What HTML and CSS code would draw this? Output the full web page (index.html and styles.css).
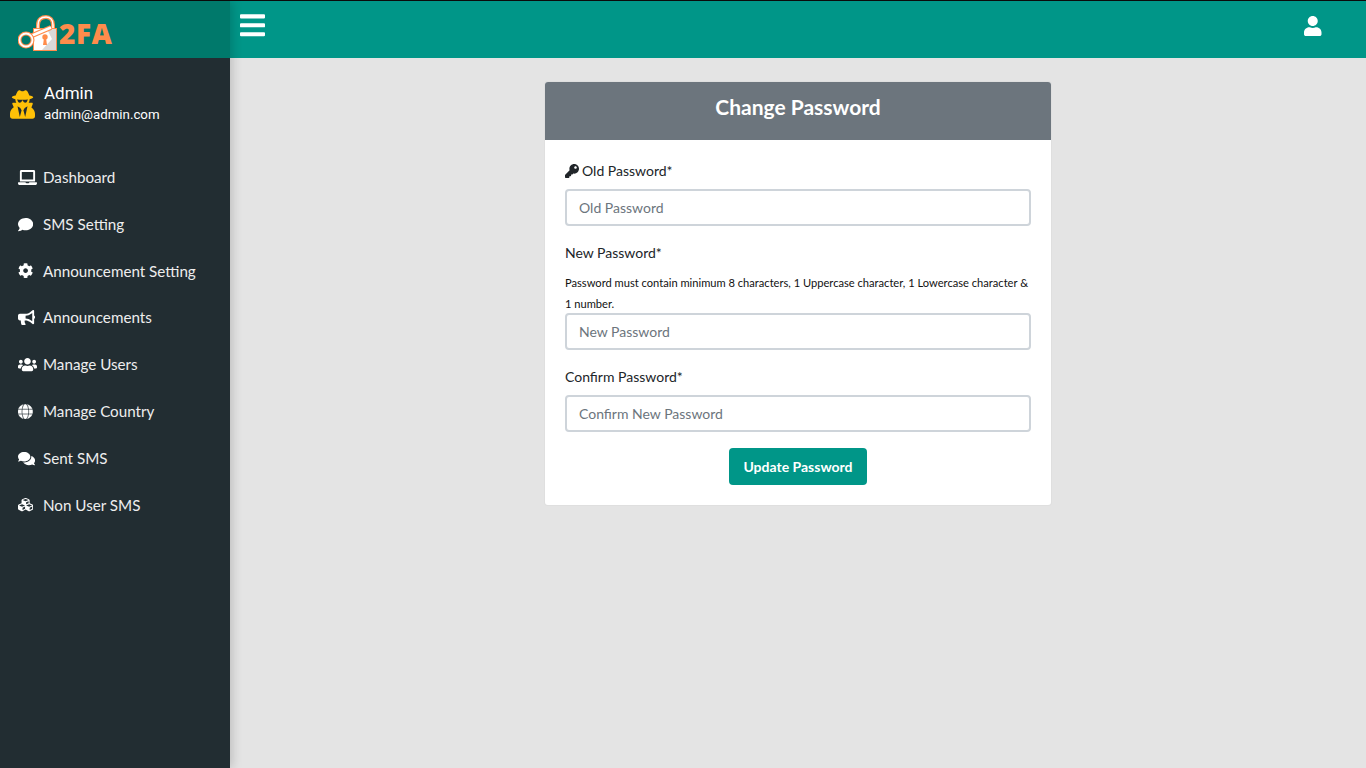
FILE: index.html
```html
<!DOCTYPE html>
<html lang="en">
<head>
<meta charset="utf-8">
<title>Change Password</title>
<link rel="stylesheet" href="styles.css">
</head>
<body>
<div class="layout">
  <aside class="sidebar">
    <div class="brand">
      <svg class="brand-mark" viewBox="0 0 39 37" aria-hidden="true">
        <path d="M20 16 V10 C20 4 24 2 28 2 C32 2 35 5 35 10 V14" fill="none" stroke="#ff8c4b" stroke-width="4"/>
        <path d="M20 16 V10 C20 4 24 2 28 2 C32 2 35 5 35 10 V14" fill="none" stroke="#fff" stroke-width="1.500"/>
        <rect x="15.500" y="13.500" width="23" height="22" fill="#fff" stroke="#ff8c4b"/>
        <path d="M29 14 H38 V35 H24 L34 24 Z" fill="#d9d9d9"/>
        <circle cx="27" cy="22" r="2.700" fill="#ff8c4b"/>
        <path d="M26 23 h2 l1 7 h-4 Z" fill="#ff8c4b"/>
        <path d="M13 21 L33 12.500" stroke="#ff8c4b" stroke-width="5"/>
        <path d="M13 21 L33 12.500" stroke="#fff" stroke-width="2.500"/>
        <circle cx="8" cy="25" r="6.500" fill="#00796b" stroke="#ff8c4b" stroke-width="4"/>
        <circle cx="8" cy="25" r="6.500" fill="none" stroke="#fff" stroke-width="1.800"/>
      </svg>
      <span class="brand-name">2FA</span>
    </div>
    <div class="profile">
      <svg class="profile-icon" viewBox="0 0 448 512" aria-hidden="true"><path d="M383.900 308.300l23.900-62.600c4-10.500-3.700-21.700-15-21.700h-58.500c11-18.900 17.800-40.600 17.800-64v-.3c39.200-7.800 64-19.100 64-31.700 0-13.300-27.300-25.100-70.100-33-9.200-32.800-27-65.800-40.600-82.800-9.500-11.900-25.900-15.600-39.500-8.800l-27.600 13.800c-9 4.500-19.600 4.500-28.600 0L182.100 3.400c-13.600-6.800-30-3.100-39.500 8.800-13.500 17-31.400 50-40.600 82.800-42.700 7.900-70 19.700-70 33 0 12.600 24.800 23.900 64 31.700v.3c0 23.400 6.800 45.100 17.800 64H56.300c-11.500 0-19.200 11.700-14.700 22.300l25.800 60.200C27.300 329.800 0 372.700 0 422.400v44.800C0 491.900 20.100 512 44.800 512h358.400c24.700 0 44.800-20.100 44.800-44.800v-44.800c0-48.400-25.800-90.400-64.100-114.100zM176 480l-41.600-192 49.600 32 24 40-32 120zm96 0l-32-120 24-40 49.600-32L272 480zm41.700-298.500c-3.900 11.900-7 24.600-16.500 33.400-10.100 9.300-48 22.400-64-25-2.800-8.400-15.400-8.400-18.300 0-17 50.200-56 32.400-64 25-9.500-8.800-12.700-21.500-16.500-33.400-.8-2.500-6.300-5.700-6.300-5.800v-10.800c28.300 3.600 61 5.800 96 5.800s67.700-2.100 96-5.800v10.800c-.1.100-5.600 3.200-6.400 5.800z"/></svg>
      <div class="profile-text">
        <div class="profile-name">Admin</div>
        <div class="profile-mail">admin@admin.com</div>
      </div>
    </div>
    <nav class="menu">
      <a class="menu-item" href="#"><span class="menu-icon"><svg viewBox="0 0 640 512" aria-hidden="true"><path d="M624 416H381.540c-.74 19.810-14.710 32-32.740 32H288c-18.690 0-33.020-17.470-32.770-32H16c-8.800 0-16 7.200-16 16v16c0 35.200 28.800 64 64 64h512c35.200 0 64-28.800 64-64v-16c0-8.800-7.200-16-16-16zM576 48c0-26.400-21.600-48-48-48H112C85.600 0 64 21.600 64 48v336h512V48zm-64 272H128V64h384v256z"/></svg></span>Dashboard</a>
      <a class="menu-item" href="#"><span class="menu-icon"><svg viewBox="0 0 512 512" aria-hidden="true"><path d="M256 32C114.600 32 0 125.100 0 240c0 49.600 21.400 95 57 130.700C44.500 421.100 2.700 466 2.200 466.500c-2.200 2.300-2.800 5.700-1.500 8.700S4.800 480 8 480c66.300 0 116-31.800 140.600-51.400 32.700 12.300 69 19.400 107.400 19.400 141.400 0 256-93.100 256-208S397.400 32 256 32z"/></svg></span>SMS Setting</a>
      <a class="menu-item" href="#"><span class="menu-icon"><svg viewBox="0 0 512 512" aria-hidden="true"><path d="M487.400 315.700l-42.600-24.600c4.300-23.200 4.300-47 0-70.200l42.600-24.600c4.900-2.800 7.100-8.600 5.500-14-11.100-35.600-30-67.800-54.700-94.600-3.800-4.100-10-5.100-14.800-2.300L380.800 110c-17.900-15.400-38.500-27.300-60.800-35.100V25.800c0-5.600-3.900-10.500-9.400-11.700-36.700-8.200-74.300-7.800-109.200 0-5.500 1.200-9.400 6.100-9.400 11.700V75c-22.200 7.900-42.800 19.800-60.800 35.100L88.700 85.500c-4.900-2.800-11-1.900-14.800 2.300-24.700 26.700-43.600 58.900-54.700 94.600-1.700 5.400.6 11.200 5.500 14L67.300 221c-4.300 23.200-4.300 47 0 70.200l-42.600 24.600c-4.900 2.800-7.100 8.600-5.500 14 11.100 35.600 30 67.800 54.700 94.600 3.800 4.100 10 5.100 14.800 2.300l42.600-24.600c17.900 15.400 38.500 27.300 60.800 35.100v49.200c0 5.600 3.900 10.500 9.400 11.700 36.700 8.200 74.300 7.800 109.200 0 5.500-1.200 9.400-6.100 9.400-11.700v-49.200c22.200-7.900 42.800-19.800 60.800-35.100l42.600 24.600c4.900 2.800 11 1.900 14.800-2.300 24.700-26.700 43.600-58.900 54.700-94.600 1.500-5.500-.7-11.300-5.600-14.100zM256 336c-44.100 0-80-35.900-80-80s35.900-80 80-80 80 35.900 80 80-35.900 80-80 80z"/></svg></span>Announcement Setting</a>
      <a class="menu-item" href="#"><span class="menu-icon"><svg viewBox="0 0 576 512" aria-hidden="true"><path d="M576 240c0-23.630-12.950-44.040-32-55.120V32.010C544 23.260 537.020 0 512 0c-7.120 0-14.190 2.380-19.980 7.020l-85.030 68.030C364.280 109.190 310.660 128 256 128H64c-35.350 0-64 28.650-64 64v96c0 35.350 28.650 64 64 64h33.700c-1.390 10.480-2.180 21.140-2.180 32 0 39.770 9.260 77.350 25.560 110.940 5.190 10.690 16.520 17.060 28.400 17.060h74.280c26.050 0 41.690-29.840 25.900-50.560-16.400-21.520-26.150-48.360-26.150-77.440 0-11.110 1.620-21.790 4.410-32H256c54.660 0 108.280 18.810 150.980 52.950l85.030 68.030a32.023 32.023 0 0 0 19.980 7.020c24.920 0 32-22.780 32-32V295.130C563.050 284.040 576 263.630 576 240zm-96 141.420l-33.050-26.440C392.950 311.780 325.120 288 256 288v-96c69.120 0 136.950-23.780 190.950-66.980L480 98.580v282.840z"/></svg></span>Announcements</a>
      <a class="menu-item" href="#"><span class="menu-icon"><svg viewBox="0 0 640 512" aria-hidden="true"><path d="M96 224c35.300 0 64-28.700 64-64s-28.700-64-64-64-64 28.700-64 64 28.700 64 64 64zm448 0c35.300 0 64-28.700 64-64s-28.700-64-64-64-64 28.700-64 64 28.700 64 64 64zm32 32h-64c-17.600 0-33.500 7.100-45.100 18.600 40.300 22.100 68.900 62 75.100 109.400h66c17.700 0 32-14.300 32-32v-32c0-35.300-28.700-64-64-64zm-256 0c61.900 0 112-50.100 112-112S381.900 32 320 32 208 82.100 208 144s50.100 112 112 112zm76.800 32h-8.300c-20.800 10-43.900 16-68.500 16s-47.600-6-68.500-16h-8.300C179.600 288 128 339.600 128 403.200V432c0 26.500 21.500 48 48 48h288c26.500 0 48-21.500 48-48v-28.800c0-63.600-51.600-115.200-115.200-115.200zm-223.700-13.400C161.500 263.100 145.600 256 128 256H64c-35.300 0-64 28.700-64 64v32c0 17.700 14.300 32 32 32h65.900c6.300-47.400 34.900-87.300 75.200-109.400z"/></svg></span>Manage Users</a>
      <a class="menu-item" href="#"><span class="menu-icon"><svg class="globe-icon" viewBox="0 0 496 512" aria-hidden="true"><path d="M336.500 160C322 70.700 287.800 8 248 8s-74 62.700-88.500 152h177zM152 256c0 22.200 1.200 43.500 3.300 64h185.300c2.100-20.500 3.300-41.800 3.300-64s-1.200-43.500-3.300-64H155.300c-2.100 20.500-3.300 41.800-3.300 64zm324.700-96c-28.600-67.900-86.500-120.400-158-141.600 24.400 33.800 41.200 84.700 50 141.600h108zM177.200 18.400C105.800 39.600 47.800 92.100 19.300 160h108c8.700-56.900 25.500-107.800 49.900-141.600zM487.400 192H372.700c2.100 21 3.300 42.500 3.300 64s-1.200 43-3.300 64h114.600c5.500-20.500 8.600-41.800 8.600-64s-3.100-43.500-8.500-64zM120 256c0-21.500 1.200-43 3.300-64H8.600C3.200 212.500 0 233.800 0 256s3.200 43.500 8.600 64h114.600c-2-21-3.200-42.500-3.200-64zm39.500 96c14.500 89.300 48.700 152 88.500 152s74-62.700 88.500-152h-177zm159.300 141.600c71.400-21.200 129.400-73.700 158-141.600h-108c-8.800 56.900-25.600 107.800-50 141.600zM19.300 352c28.600 67.900 86.500 120.400 158 141.600-24.400-33.800-41.200-84.700-50-141.600h-108z"/></svg></span>Manage Country</a>
      <a class="menu-item" href="#"><span class="menu-icon"><svg viewBox="0 0 576 512" aria-hidden="true"><path d="M416 192c0-88.400-93.100-160-208-160S0 103.600 0 192c0 34.300 14.100 65.900 38 92-13.400 30.200-35.500 54.200-35.800 54.500-2.200 2.300-2.800 5.700-1.500 8.700S4.800 352 8 352c36.600 0 66.900-12.300 88.700-25 32.200 15.700 70.300 25 111.300 25 114.900 0 208-71.600 208-160zm122 220c23.900-26 38-57.700 38-92 0-66.900-53.500-124.200-129.300-148.100.9 6.600 1.300 13.300 1.300 20.100 0 105.900-107.700 192-240 192-10.800 0-21.300-.8-31.700-1.900C207.800 439.600 281.800 480 368 480c41 0 79.100-9.200 111.300-25 21.800 12.700 52.100 25 88.700 25 3.200 0 6.100-1.900 7.300-4.800 1.300-2.900.7-6.300-1.500-8.700-.3-.3-22.400-24.200-35.800-54.500z"/></svg></span>Sent SMS</a>
      <a class="menu-item" href="#"><span class="menu-icon"><svg viewBox="0 0 512 512" aria-hidden="true"><path d="M488.600 250.200L392 214V105.500c0-15-9.300-28.400-23.400-33.700l-100-37.500c-8.100-3.100-17.100-3.100-25.300 0l-100 37.500c-14.100 5.300-23.400 18.700-23.400 33.700V214l-96.600 36.200C9.300 255.500 0 268.900 0 283.900V394c0 13.600 7.700 26.100 19.900 32.200l100 50c10.100 5.100 22.100 5.100 32.200 0l103.900-52 103.900 52c10.100 5.100 22.100 5.100 32.200 0l100-50c12.200-6.100 19.900-18.600 19.900-32.200V283.900c0-15-9.300-28.400-23.400-33.700zM358 214.800l-85 31.900v-68.200l85-37v73.300zM154 104.100l102-38.200 102 38.200v.6l-102 41.400-102-41.400v-.6zm84 291.100l-85 42.500v-79.100l85-38.800v75.400zm0-112l-102 41.400-102-41.400v-.6l102-38.200 102 38.200v.6zm240 112l-85 42.500v-79.100l85-38.800v75.400zm0-112l-102 41.400-102-41.400v-.6l102-38.200 102 38.200v.6z"/></svg></span>Non User SMS</a>
    </nav>
  </aside>
  <div class="content">
    <header class="topbar">
      <svg class="bars-icon" viewBox="0 0 448 512" aria-hidden="true"><path d="M16 132h416c8.837 0 16-7.163 16-16V76c0-8.837-7.163-16-16-16H16C7.163 60 0 67.163 0 76v40c0 8.837 7.163 16 16 16zm0 160h416c8.837 0 16-7.163 16-16v-40c0-8.837-7.163-16-16-16H16c-8.837 0-16 7.163-16 16v40c0 8.837 7.163 16 16 16zm0 160h416c8.837 0 16-7.163 16-16v-40c0-8.837-7.163-16-16-16H16c-8.837 0-16 7.163-16 16v40c0 8.837 7.163 16 16 16z"/></svg>
      <svg class="user-icon" viewBox="0 0 448 512" aria-hidden="true"><path d="M224 256c70.700 0 128-57.300 128-128S294.700 0 224 0 96 57.300 96 128s57.300 128 128 128zm89.600 32h-16.700c-22.200 10.200-46.900 16-72.900 16s-50.600-5.800-72.900-16h-16.700C60.200 288 0 348.200 0 422.400V464c0 26.500 21.500 48 48 48h352c26.500 0 48-21.500 48-48v-41.600c0-74.200-60.200-134.400-134.400-134.400z"/></svg>
    </header>
    <main class="main">
      <section class="card">
        <h1 class="card-title">Change Password</h1>
        <form class="card-body">
          <div class="field">
            <label class="field-label"><svg class="key-icon" viewBox="0 0 512 512" aria-hidden="true"><path d="M512 176.001C512 273.203 433.202 352 336 352c-11.220 0-22.190-1.062-32.827-3.069l-24.012 27.014A23.999 23.999 0 0 1 261.223 384H224v40c0 13.255-10.745 24-24 24h-40v40c0 13.255-10.745 24-24 24H24c-13.255 0-24-10.745-24-24v-78.059c0-6.365 2.529-12.470 7.029-16.971l161.802-161.802C163.108 213.814 160 195.271 160 176 160 78.798 238.797.001 335.999 0 433.488-.001 512 78.511 512 176.001zM336 128c0 26.510 21.490 48 48 48s48-21.490 48-48-21.490-48-48-48-48 21.490-48 48z"/></svg>Old Password*</label>
            <input class="field-input" type="password" placeholder="Old Password">
          </div>
          <div class="field">
            <label class="field-label">New Password*</label>
            <p class="field-hint">Password must contain minimum 8 characters, 1 Uppercase character, 1 Lowercase character &amp; 1 number.</p>
            <input class="field-input" type="password" placeholder="New Password">
          </div>
          <div class="field">
            <label class="field-label">Confirm Password*</label>
            <input class="field-input" type="password" placeholder="Confirm New Password">
          </div>
          <div class="actions"><button class="submit" type="button">Update Password</button></div>
        </form>
      </section>
    </main>
  </div>
</div>
</body>
</html>
```
FILE: styles.css
```css
* { box-sizing: border-box; }
html, body { margin: 0; height: 100%; }
body {
  font-family: "Lato", "Liberation Sans", sans-serif;
  color: #212529;
  background: #e4e4e4;
  overflow: hidden;
}
.layout { display: flex; height: 768px; border-top: 1px solid #0b0b0b; }
.sidebar {
  width: 230px;
  flex: none;
  background: #222d32;
  box-shadow: 2px 0 10px rgba(0,0,0,.18);
  z-index: 2;
}
.brand {
  height: 57px;
  background: #00796b;
  display: flex;
  align-items: flex-start;
  padding: 14px 0 0 18px;
  gap: 2px;
}
.brand-mark { width: 39px; height: 37px; flex: none; }
.brand-name {
  font-family: "Open Sans", sans-serif;
  font-weight: 800;
  font-size: 28px;
  line-height: 28px;
  color: #ff8c4b;
  letter-spacing: 0.5px;
  margin-top: 4px;
}
.profile {
  display: flex;
  align-items: center;
  padding: 23px 10px 0;
  gap: 9px;
}
.profile-icon { width: 25px; height: 29px; fill: #ffc107; flex: none; margin-top: 3px; }
.profile-name { font-family: "Roboto", sans-serif; font-size: 17px; line-height: 24px; color: #fff; margin-bottom: 1px; }
.profile-mail { font-family: "Roboto", sans-serif; font-size: 13.300px; line-height: 18px; color: #fff; }
.menu { padding-top: 29.950px; }
.menu-item {
  display: flex;
  align-items: center;
  padding: 12px 0 12px 18px;
  font-size: 15.2px;
  line-height: 22.8px;
  color: #eee;
  text-decoration: none;
}
.menu-icon { width: 25px; flex: none; display: flex; }
.menu-icon svg { height: 15.2px; fill: #fff; display: block; }
.menu-icon .globe-icon { stroke: #fff; stroke-width: 12px; }
.content { flex: 1; min-width: 0; display: flex; flex-direction: column; }
.topbar {
  height: 57px;
  background: #009688;
  display: flex;
  justify-content: space-between;
  align-items: flex-start;
  padding: 10px 44.500px 0 10px;
}
.bars-icon { width: 25px; height: 28.6px; fill: #fff; }
.user-icon { width: 17.500px; height: 20px; fill: #fff; margin-top: 5px; }
.main { flex: 1; padding-top: 23px; display: flex; justify-content: center; align-items: flex-start; }
.card {
  width: 508px;
  background: #fff;
  border: 1px solid rgba(0,0,0,.125);
  border-radius: 4px;
}
.card-title {
  margin: 0;
  height: 58px;
  padding-top: 8px;
  background: #6c757d;
  border-radius: 3px 3px 0 0;
  color: #fff;
  text-align: center;
  font-size: 21px;
  line-height: 33px;
  font-weight: 700;
}
.card-body { padding: 20px; }
.field { margin-bottom: 16px; }
.field-label { display: block; font-size: 14px; line-height: 21px; margin-bottom: 8px; }
.key-icon { width: 14px; height: 14px; fill: #212529; margin-right: 3px; vertical-align: -2px; }
.field-hint { margin: 0 0 -1px; padding-top: 1px; font-size: 11.130px; line-height: 21px; color: #111; }
.field-input {
  display: block;
  width: 100%;
  height: 37px;
  padding: 0 12px;
  border: 2px solid #ced4da;
  border-radius: 4px;
  background: #fff;
  font: 14px "Lato", sans-serif;
  color: #495057;
  outline: none;
}
.field-input::placeholder { color: #6c757d; opacity: 1; }
.actions { display: flex; justify-content: center; }
.submit {
  width: 138px;
  height: 37px;
  border: 0;
  border-radius: 4px;
  background: #009688;
  color: #fff;
  font: 700 14px "Lato", sans-serif;
}
```
